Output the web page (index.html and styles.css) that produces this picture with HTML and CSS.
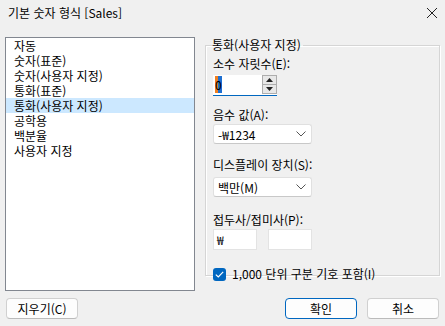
FILE: index.html
```html
<!DOCTYPE html>
<html lang="ko">
<head>
<meta charset="UTF-8">
<title>기본 숫자 형식 [Sales]</title>
<link rel="stylesheet" href="styles.css">
</head>
<body>
<div class="titlebar">
    <span class="title">기본 숫자 형식 [Sales]</span>
    <svg class="close" width="12" height="12" viewBox="0 0 12 12"><path d="M1 1 L11 11 M11 1 L1 11" stroke="#222" stroke-width="1" fill="none"/></svg>
</div>
<div class="main">
    <div class="list">
        <div class="item">자동</div>
        <div class="item">숫자(표준)</div>
        <div class="item">숫자(사용자 지정)</div>
        <div class="item">통화(표준)</div>
        <div class="item selected">통화(사용자 지정)</div>
        <div class="item">공학용</div>
        <div class="item">백분율</div>
        <div class="item">사용자 지정</div>
    </div>
    <fieldset class="group">
        <legend>통화(사용자 지정)</legend>
        <div class="label first">소수 자릿수(E):</div>
        <div class="spinner">
            <div class="spin-text"><span class="sel">0</span></div>
            <div class="spin-buttons">
                <div class="spin-btn"><svg width="7" height="4" viewBox="0 0 7 4"><path d="M3.5 0 L7 4 L0 4 Z" fill="#222"/></svg></div>
                <div class="spin-btn"><svg width="7" height="4" viewBox="0 0 7 4"><path d="M0 0 L7 0 L3.5 4 Z" fill="#222"/></svg></div>
            </div>
        </div>
        <div class="label l2">음수 값(A):</div>
        <div class="combo c1">
            <span>-₩1234</span>
            <svg width="10" height="6" viewBox="0 0 10 6"><path d="M0.5 0.5 L5 5 L9.5 0.5" stroke="#555" fill="none"/></svg>
        </div>
        <div class="label">디스플레이 장치(S):</div>
        <div class="combo c2">
            <span>백만(M)</span>
            <svg width="10" height="6" viewBox="0 0 10 6"><path d="M0.5 0.5 L5 5 L9.5 0.5" stroke="#555" fill="none"/></svg>
        </div>
        <div class="label l4">접두사/접미사(P):</div>
        <div class="affix">
            <div class="textbox">₩</div>
            <div class="textbox"></div>
        </div>
        <div class="check-row">
            <span class="checkbox"><svg width="9" height="7" viewBox="0 0 9 7"><path d="M0.8 3.6 L3.3 6 L8.2 0.9" stroke="#fff" stroke-width="1.2" fill="none"/></svg></span>
            <span>1,000 단위 구분 기호 포함(I)</span>
        </div>
    </fieldset>
</div>
<div class="footer">
    <button class="button">지우기(C)</button>
    <div class="spacer"></div>
    <button class="button default">확인</button>
    <button class="button">취소</button>
</div>
</body>
</html>
```

FILE: styles.css
```css
body {
    margin: 0;
    width: 445px;
    height: 326px;
    background-color: #f0f0f0;
    font-family: "Noto Sans CJK KR", "Noto Sans", sans-serif;
    font-size: 12px;
    color: #000;
    overflow: hidden;
}

.titlebar {
    height: 26px;
    display: flex;
    align-items: center;
    padding: 0 7px 0 8px;
}

.title {
    flex: 1;
    line-height: 16px;
}

.main {
    display: flex;
    align-items: flex-start;
    padding: 11px 0 0 5px;
}

.list {
    width: 188px;
    height: 252px;
    background-color: #fff;
    border: 1px solid #828790;
}

.item {
    height: 15px;
    line-height: 15px;
    padding-left: 8px;
    white-space: nowrap;
}

.item.selected {
    background-color: #cce8ff;
}

.group {
    margin: 0 0 0 10px;
    padding: 0 0 0 7px;
    width: 226px;
    height: 237px;
    border: 1px solid #d5d5d5;
    box-shadow: inset 1px 1px 0 #fff, 1px 1px 0 #fff;
    min-width: 0;
    box-sizing: content-box;
}

.group legend {
    padding: 0 2px 0 0;
    line-height: 16px;
    margin-left: -1px;
}

.label {
    line-height: 16px;
    margin-top: 13px;
}

.label.first {
    margin-top: 3px;
}

.label.l2 {
    margin-top: 11px;
}

.label.l4 {
    margin-top: 15px;
}

.spinner {
    display: flex;
    width: 64px;
    height: 20px;
    margin-top: 3px;
    background-color: #fff;
    border-bottom: 1px solid #0067c0;
}

.spin-text {
    flex: 1;
    line-height: 19px;
    padding-left: 2px;
}

.sel {
    background: linear-gradient(to right, #f08020 45%, #1e6fd0 45%);
    color: #000;
}

.spin-buttons {
    width: 15px;
    display: flex;
    flex-direction: column;
    padding: 0 0 1px 0;
}

.spin-btn {
    flex: 1;
    border: 1px solid #adadad;
    background-color: #e8e8e8;
    display: flex;
    align-items: center;
    justify-content: center;
}

.spin-btn + .spin-btn {
    border-top: none;
}

.combo {
    width: 88px;
    height: 18px;
    margin-top: 1px;
    background-color: #fff;
    border: 1px solid #e0e0e0;
    border-bottom-color: #c8c8c8;
    border-radius: 3px;
    display: flex;
    align-items: center;
    justify-content: space-between;
    padding: 0 5px 0 4px;
    box-sizing: content-box;
}

.c2 {
    margin-top: 4px;
}

.affix {
    display: flex;
    gap: 11px;
    margin-top: 1px;
}

.textbox {
    width: 44px;
    height: 21px;
    background-color: #fff;
    border: 1px solid #e3e3e3;
    line-height: 20px;
    padding-left: 3px;
    box-sizing: border-box;
}

.check-row {
    display: flex;
    align-items: center;
    gap: 6px;
    margin-top: 17px;
    line-height: 14px;
}

.checkbox {
    width: 13px;
    height: 13px;
    border-radius: 3px;
    background-color: #0067c0;
    display: flex;
    align-items: center;
    justify-content: center;
}

.footer {
    display: flex;
    align-items: center;
    padding: 7px 6px 0 6px;
    gap: 10px;
}

.spacer {
    flex: 1;
}

.button {
    width: 72px;
    height: 21px;
    font-family: "Noto Sans CJK KR", "Noto Sans", sans-serif;
    font-size: 12px;
    background-color: #fdfdfd;
    border: 1px solid #d0d0d0;
    border-bottom-color: #bbb;
    border-radius: 4px;
    padding: 0;
    color: #000;
}

.button.default {
    border: 1px solid #0067c0;
}
```
